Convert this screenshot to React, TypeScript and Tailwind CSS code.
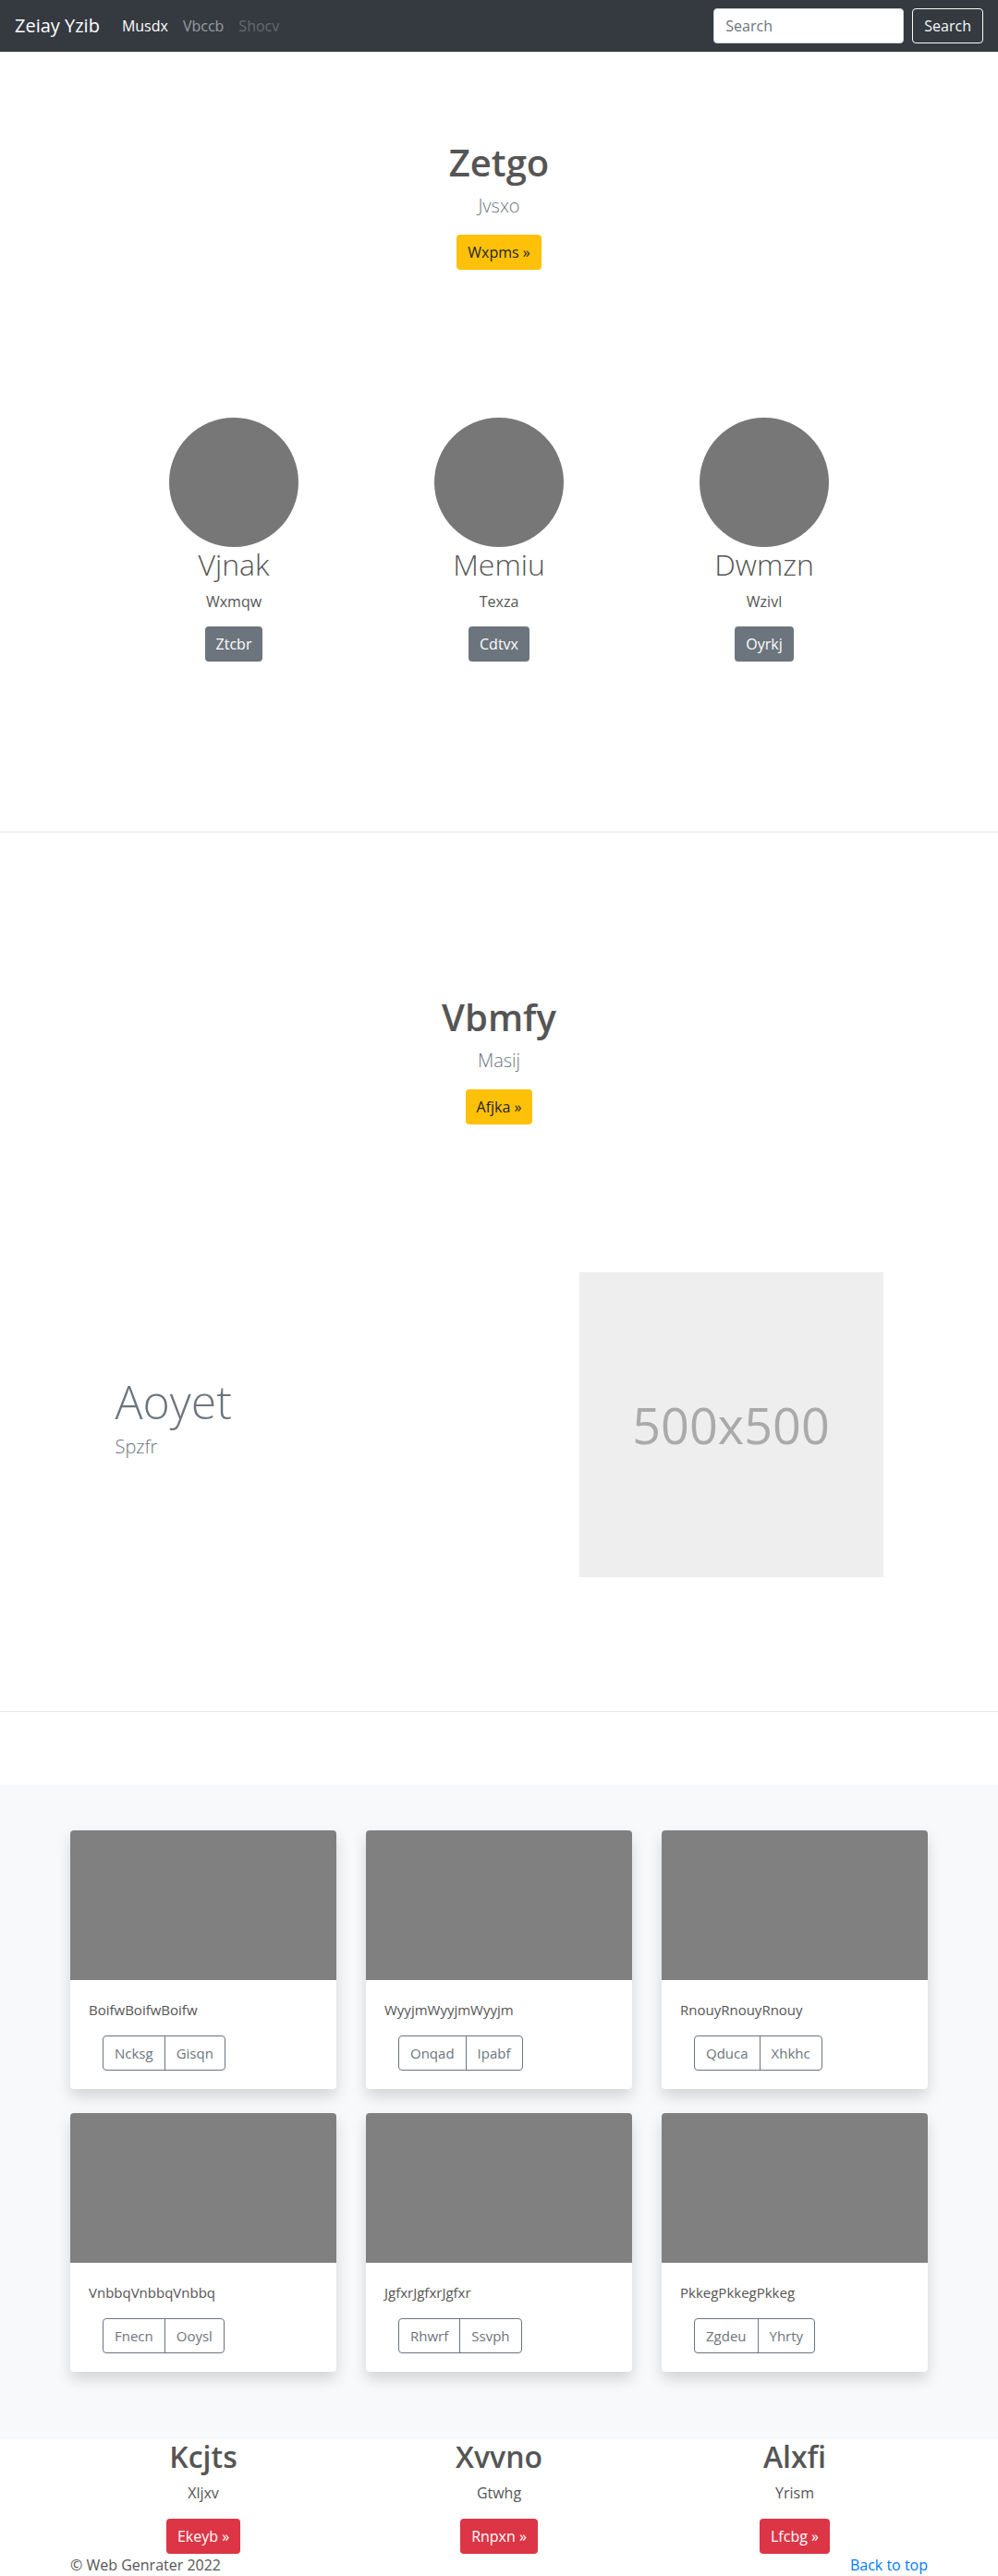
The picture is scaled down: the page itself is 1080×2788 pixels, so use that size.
import React from "react";

const people = [
  { name: "Vjnak", sub: "Wxmqw", btn: "Ztcbr" },
  { name: "Memiu", sub: "Texza", btn: "Cdtvx" },
  { name: "Dwmzn", sub: "Wzivl", btn: "Oyrkj" },
];

const cards = [
  { text: "BoifwBoifwBoifw", a: "Ncksg", b: "Gisqn" },
  { text: "WyyjmWyyjmWyyjm", a: "Onqad", b: "Ipabf" },
  { text: "RnouyRnouyRnouy", a: "Qduca", b: "Xhkhc" },
  { text: "VnbbqVnbbqVnbbq", a: "Fnecn", b: "Ooysl" },
  { text: "JgfxrJgfxrJgfxr", a: "Rhwrf", b: "Ssvph" },
  { text: "PkkegPkkegPkkeg", a: "Zgdeu", b: "Yhrty" },
];

const bottoms = [
  { title: "Kcjts", sub: "Xljxv", btn: "Ekeyb »" },
  { title: "Xvvno", sub: "Gtwhg", btn: "Rnpxn »" },
  { title: "Alxfi", sub: "Yrism", btn: "Lfcbg »" },
];

function Hero({ title, sub, btn, top }: { title: string; sub: string; btn: string; top: string }) {
  return (
    <section className={`text-center ${top}`}>
      <h1 className="text-[40px] leading-[48px] font-semibold text-[#555]">{title}</h1>
      <p className="mt-2 text-[20px] leading-[30px] font-light text-[#6c757d]">{sub}</p>
      <button className="mt-4 h-[38px] px-3 rounded bg-[#ffc107] text-[#212529] text-base">{btn}</button>
    </section>
  );
}

export default function App() {
  return (
    <div className="w-[1080px] bg-white font-['Open_Sans',sans-serif] text-[#212529]">
      {/* navbar */}
      <nav className="h-14 bg-[#343a40] flex items-center px-4">
        <span className="text-white text-[20px] mr-4">Zeiay Yzib</span>
        <div className="flex text-base">
          <a className="px-2 text-white">Musdx</a>
          <a className="px-2 text-white/50">Vbccb</a>
          <a className="px-2 text-white/25">Shocv</a>
        </div>
        <form className="ml-auto flex items-center">
          <input
            placeholder="Search"
            className="w-[206px] h-[38px] px-3 rounded bg-white border border-[#ced4da] text-base placeholder:text-[#6c757d]"
          />
          <button type="button" className="ml-[9px] h-[38px] px-3 rounded border border-[#f8f9fa] text-[#f8f9fa] text-base">
            Search
          </button>
        </form>
      </nav>

      <Hero title="Zetgo" sub="Jvsxo" btn="Wxpms »" top="pt-[96px]" />

      {/* circles */}
      <div className="mt-[160px] w-[861px] mx-auto grid grid-cols-3 text-center">
        {people.map((p) => (
          <div key={p.name} className="flex flex-col items-center">
            <div className="w-[140px] h-[140px] rounded-full bg-[#777]" />
            <h2 className="text-[32px] leading-[38px] font-light text-[#555]">{p.name}</h2>
            <p className="mt-[9px] text-base leading-6 text-[#555]">{p.sub}</p>
            <button className="mt-[15px] h-[38px] px-3 rounded bg-[#6c757d] text-white text-base">{p.btn}</button>
          </div>
        ))}
      </div>

      <hr className="mt-[184px] border-t border-[#e6e6e6]" />

      <Hero title="Vbmfy" sub="Masij" btn="Afjka »" top="pt-[176px]" />

      {/* feature */}
      <div className="mt-[160px] w-[861px] mx-auto flex items-center">
        <div className="w-[502px] pl-[15px]">
          <h2 className="text-[50px] leading-[60px] font-light text-[#6c757d]">Aoyet</h2>
          <p className="mt-1 mb-4 text-[20px] leading-[30px] font-light text-[#6c757d]">Spzfr</p>
        </div>
        <div className="w-[359px] px-[15px]">
          <div className="w-[329px] h-[330px] bg-[#eee] flex items-center justify-center text-[54px] text-[#aaa]">
            500x500
          </div>
        </div>
      </div>

      <hr className="mt-[145px] border-t border-[#e6e6e6]" />

      {/* cards */}
      <section className="mt-[79px] bg-[#f8f9fa] pt-[49px] pb-[73px]">
        <div className="w-[928px] mx-auto grid grid-cols-3 gap-x-8 gap-y-[26px]">
          {cards.map((c) => (
            <div key={c.text} className="bg-white rounded overflow-hidden shadow-[0_8px_16px_rgba(0,0,0,0.15)]">
              <div className="h-[162px] bg-[#808080]" />
              <div className="p-5">
                <p className="text-[15px] leading-6 text-[#555]">{c.text}</p>
                <div className="mt-4 ml-[15px] inline-flex h-[38px] rounded border border-[#6c757d] text-[#6c757d] text-[15px]">
                  <span className="px-3 flex items-center border-r border-[#6c757d]">{c.a}</span>
                  <span className="px-3 flex items-center">{c.b}</span>
                </div>
              </div>
            </div>
          ))}
        </div>
      </section>

      {/* bottom columns */}
      <div className="w-[960px] mx-auto grid grid-cols-3 text-center">
        {bottoms.map((b) => (
          <div key={b.title} className="flex flex-col items-center">
            <h2 className="text-[32px] leading-[38px] font-semibold text-[#555]">{b.title}</h2>
            <p className="mt-2 text-base leading-6 text-[#555]">{b.sub}</p>
            <button className="mt-4 h-[38px] px-3 rounded bg-[#dc3545] text-white text-base">{b.btn}</button>
          </div>
        ))}
      </div>

      <footer className="w-[928px] mx-auto flex justify-between text-base leading-6">
        <p className="text-[#555]">© Web Genrater 2022</p>
        <a className="text-[#007bff]">Back to top</a>
      </footer>
    </div>
  );
}
